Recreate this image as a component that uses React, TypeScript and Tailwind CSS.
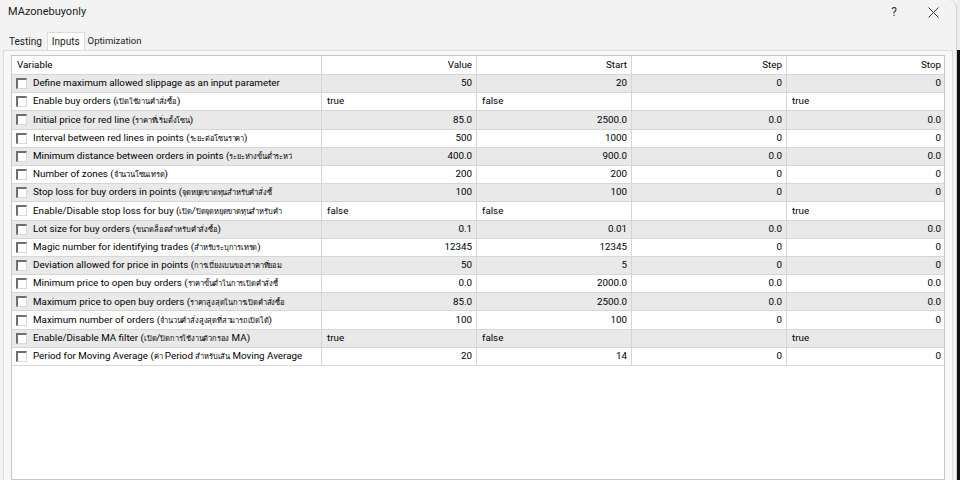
import React from 'react'

type Row = {
  name: string
  value: string
  start: string
  step: string
  stop: string
}

// names are cut where the terminal cuts them in the list
const rows: Row[] = [
  { name: 'Define maximum allowed slippage as an input parameter', value: '50', start: '20', step: '0', stop: '0' },
  { name: 'Enable buy orders (เปิดใช้งานคำสั่งซื้อ)', value: 'true', start: 'false', step: '', stop: 'true' },
  { name: 'Initial price for red line (ราคาที่เริ่มตั้งโซน)', value: '85.0', start: '2500.0', step: '0.0', stop: '0.0' },
  { name: 'Interval between red lines in points (ระยะต่อโซนราคา)', value: '500', start: '1000', step: '0', stop: '0' },
  { name: 'Minimum distance between orders in points (ระยะห่างขั้นต่ำระหว่', value: '400.0', start: '900.0', step: '0.0', stop: '0.0' },
  { name: 'Number of zones (จำนวนโซนเทรด)', value: '200', start: '200', step: '0', stop: '0' },
  { name: 'Stop loss for buy orders in points (จุดหยุดขาดทุนสำหรับคำสั่งซื้', value: '100', start: '100', step: '0', stop: '0' },
  { name: 'Enable/Disable stop loss for buy (เปิด/ปิดจุดหยุดขาดทุนสำหรับคำ', value: 'false', start: 'false', step: '', stop: 'true' },
  { name: 'Lot size for buy orders (ขนาดล็อตสำหรับคำสั่งซื้อ)', value: '0.1', start: '0.01', step: '0.0', stop: '0.0' },
  { name: 'Magic number for identifying trades (สำหรับระบุการเทรด)', value: '12345', start: '12345', step: '0', stop: '0' },
  { name: 'Deviation allowed for price in points (การเบี่ยงเบนของราคาที่ยอม', value: '50', start: '5', step: '0', stop: '0' },
  { name: 'Minimum price to open buy orders (ราคาขั้นต่ำในการเปิดคำสั่งซื้', value: '0.0', start: '2000.0', step: '0.0', stop: '0.0' },
  { name: 'Maximum price to open buy orders (ราคาสูงสุดในการเปิดคำสั่งซื้อ', value: '85.0', start: '2500.0', step: '0.0', stop: '0.0' },
  { name: 'Maximum number of orders (จำนวนคำสั่งสูงสุดที่สามารถเปิดได้)', value: '100', start: '100', step: '0', stop: '0' },
  { name: 'Enable/Disable MA filter (เปิด/ปิดการใช้งานตัวกรอง MA)', value: 'true', start: 'false', step: '', stop: 'true' },
  { name: 'Period for Moving Average (ค่า Period สำหรับเส้น Moving Average', value: '20', start: '14', step: '0', stop: '0' },
]

const isBool = (v: string) => v === 'true' || v === 'false'

// Thai runs come out much narrower in the terminal's font, so shrink them
function Name({ text }: { text: string }) {
  const parts = text.split(/([\u0E00-\u0E7F]+)/)
  return (
    <span>
      {parts.map((p, i) =>
        /[\u0E00-\u0E7F]/.test(p) ? (
          <span key={i} className="text-[7.5px] tracking-[-0.2px]">
            {p}
          </span>
        ) : (
          <React.Fragment key={i}>{p}</React.Fragment>
        )
      )}
    </span>
  )
}

function Cell({ text, last }: { text: string; last?: boolean }) {
  return (
    <div
      className={`h-full flex items-center overflow-hidden whitespace-nowrap ${
        isBool(text) ? 'justify-start pl-[5px]' : 'justify-end pr-[4px]'
      } ${last ? '' : 'border-r border-[#d6d6d6]'}`}
    >
      {text}
    </div>
  )
}

function Checkbox() {
  return (
    <span className="shrink-0 w-[11px] h-[11px] bg-white border-t-2 border-l-2 border-t-[#6e6e6e] border-l-[#6e6e6e] border-b border-r border-b-[#d8d8d8] border-r-[#d8d8d8]" />
  )
}

export default function App() {
  const font = { fontFamily: 'Roboto, "Liberation Sans", "Noto Sans", sans-serif' }

  return (
    <div className="w-[960px] h-[480px] flex overflow-hidden bg-[#f3f3f3]" style={font}>
      {/* Window */}
      <div className="w-[957px] h-full flex flex-col bg-[#f3f3f3] rounded-tr-[8px] border-r border-[#cfcfcf]">
        {/* Title bar */}
        <div className="h-[24px] flex items-center justify-between pl-[8px] pr-[17px]">
          <span className="text-[11px] text-[#1b1b1b]">MAzonebuyonly</span>
          <div className="flex items-center gap-[31px] text-[#333]">
            <span className="text-[12px]">?</span>
            <svg width="11" height="11" viewBox="0 0 11 11">
              <path d="M0.5 0.5 L10.5 10.5 M10.5 0.5 L0.5 10.5" stroke="#333" strokeWidth="1" />
            </svg>
          </div>
        </div>

        {/* Tabs */}
        <div className="h-[26px] flex items-end pl-[4px] text-[10px] text-[#1b1b1b]">
          <div className="h-[17px] pl-[5px] pr-[5px] flex items-center">Testing</div>
          <div className="h-[18px] px-[4px] flex items-center bg-white border-x border-t border-[#dcdcdc]">Inputs</div>
          <div className="h-[17px] px-[3px] flex items-center text-[9.5px]">Optimization</div>
        </div>

        {/* Panel */}
        <div className="flex-1 mx-[3px] bg-[#f8f8f8] border-t border-x border-[#dcdcdc] pl-[7px] pr-[7px] pt-[4px] flex flex-col min-h-0">
          <div className="flex-1 bg-white border border-[#c6c6c6] text-[9.8px] text-black min-h-0">
            {/* Header */}
            <div className="grid grid-cols-[310px_155px_155px_155px_158px] h-[19px] border-b border-[#d6d6d6]">
              <div className="h-full flex items-center pl-[5px] border-r border-[#d6d6d6]">Variable</div>
              <div className="h-full flex items-center justify-end pr-[4px] border-r border-[#d6d6d6]">Value</div>
              <div className="h-full flex items-center justify-end pr-[4px] border-r border-[#d6d6d6]">Start</div>
              <div className="h-full flex items-center justify-end pr-[4px] border-r border-[#d6d6d6]">Step</div>
              <div className="h-full flex items-center justify-end pr-[4px]">Stop</div>
            </div>

            {rows.map((r, i) => (
              <div
                key={i}
                className={`grid grid-cols-[310px_155px_155px_155px_158px] h-[18.2px] border-b border-[#d6d6d6] ${
                  i % 2 === 0 ? 'bg-[#e9e9e9]' : 'bg-white'
                }`}
              >
                <div className="h-full flex items-center gap-[6px] pl-[4px] overflow-hidden whitespace-nowrap border-r border-[#d6d6d6]">
                  <Checkbox />
                  <Name text={r.name} />
                </div>
                <Cell text={r.value} />
                <Cell text={r.start} />
                <Cell text={r.step} />
                <Cell text={r.stop} last />
              </div>
            ))}
          </div>
        </div>
      </div>

      {/* Edge of the desktop behind */}
      <div className="flex-1 flex flex-col">
        <div className="h-[50px] bg-[#ececec]" />
        <div className="flex-1 bg-[#111]" />
      </div>
    </div>
  )
}
